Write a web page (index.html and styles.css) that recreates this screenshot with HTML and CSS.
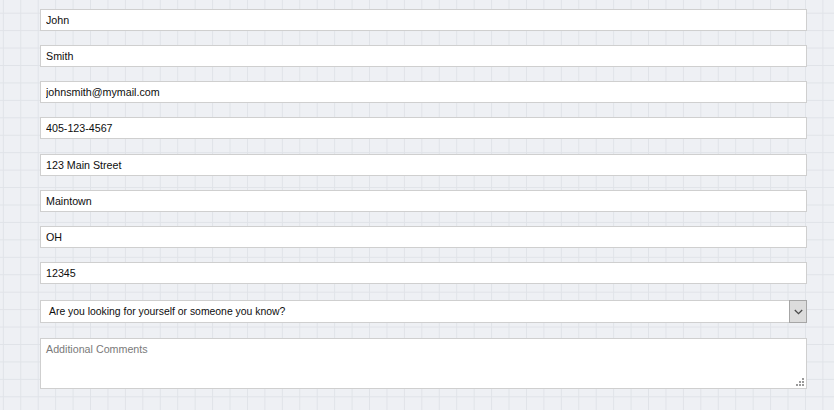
FILE: index.html
```html
<!DOCTYPE html>
<html>
<head>
<meta charset="utf-8">
<link rel="stylesheet" href="styles.css">
</head>
<body>
<form class="form">
  <input class="field" type="text" value="John">
  <input class="field" type="text" value="Smith">
  <input class="field" type="text" value="johnsmith@mymail.com">
  <input class="field" type="text" value="405-123-4567">
  <input class="field" type="text" value="123 Main Street">
  <input class="field" type="text" value="Maintown">
  <input class="field" type="text" value="OH">
  <input class="field" type="text" value="12345">
  <div class="select">
    <span class="select-text">Are you looking for yourself or someone you know?</span>
    <span class="select-arrow"><svg width="9" height="6" viewBox="0 0 9 6"><path d="M0.8 1 L4.5 4.6 L8.2 1" fill="none" stroke="#4a4a4a" stroke-width="1.3"/></svg></span>
  </div>
  <div class="comments">
    <textarea class="textarea" placeholder="Additional Comments"></textarea>
    <span class="grip">
      <i class="d d1"></i><i class="d d2"></i><i class="d d3"></i><i class="d d4"></i><i class="d d5"></i><i class="d d6"></i>
    </span>
  </div>
</form>
</body>
</html>
```
FILE: styles.css
```css
html, body {
  margin: 0;
  padding: 0;
  height: 100%;
}
body {
  background-color: #eef0f4;
  background-image:
    linear-gradient(to right, #e0e3e8 1px, transparent 1px),
    linear-gradient(to bottom, #e0e3e8 1px, transparent 1px);
  background-size: 17.45px 17.45px;
  background-position: 2.85px 12.7px;
  font-family: "Liberation Sans", Arial, sans-serif;
}
.form {
  display: flex;
  flex-direction: column;
  gap: 14.15px;
  width: 767px;
  padding: 9px 0 0 40px;
  margin: 0;
}
.field {
  box-sizing: border-box;
  display: block;
  width: 100%;
  height: 22px;
  margin: 0;
  padding: 0 5px;
  border: 1px solid #cfcfcf;
  background: #fff;
  font-family: "Liberation Sans", Arial, sans-serif;
  font-size: 10.7px;
  color: #0d0d0d;
  outline: none;
}
.select {
  box-sizing: border-box;
  display: flex;
  align-items: stretch;
  height: 23px;
  margin-top: 2px;
  border: 1px solid #cfcfcf;
  border-right: none;
  background: #fff;
  font-size: 10.4px;
  color: #0d0d0d;
}
.select-text {
  flex: 1;
  display: flex;
  align-items: center;
  padding-left: 8px;
}
.select-arrow {
  box-sizing: border-box;
  width: 18px;
  margin-top: -1px;
  margin-bottom: -1px;
  display: flex;
  align-items: center;
  justify-content: center;
  background: #dcdcdc;
  border: 1px solid #a6a6a6;
}
.comments {
  position: relative;
  height: 51px;
  margin-top: 1px;
}
.textarea {
  box-sizing: border-box;
  display: block;
  width: 100%;
  height: 100%;
  margin: 0;
  padding: 4px 5px;
  border: 1px solid #cfcfcf;
  background: #fff;
  resize: none;
  outline: none;
  font-family: "Liberation Sans", Arial, sans-serif;
  font-size: 10.7px;
  color: #0d0d0d;
}
.textarea::placeholder {
  color: #7a7a7a;
}
.grip {
  position: absolute;
  right: 3px;
  bottom: 3px;
  width: 8px;
  height: 8px;
}
.d {
  position: absolute;
  width: 2px;
  height: 2px;
  background: #9a9a9a;
}
.d1 { right: 0; top: 0; }
.d2 { right: 0; top: 3px; }
.d3 { right: 3px; top: 3px; }
.d4 { right: 0; top: 6px; }
.d5 { right: 3px; top: 6px; }
.d6 { right: 6px; top: 6px; }
```
